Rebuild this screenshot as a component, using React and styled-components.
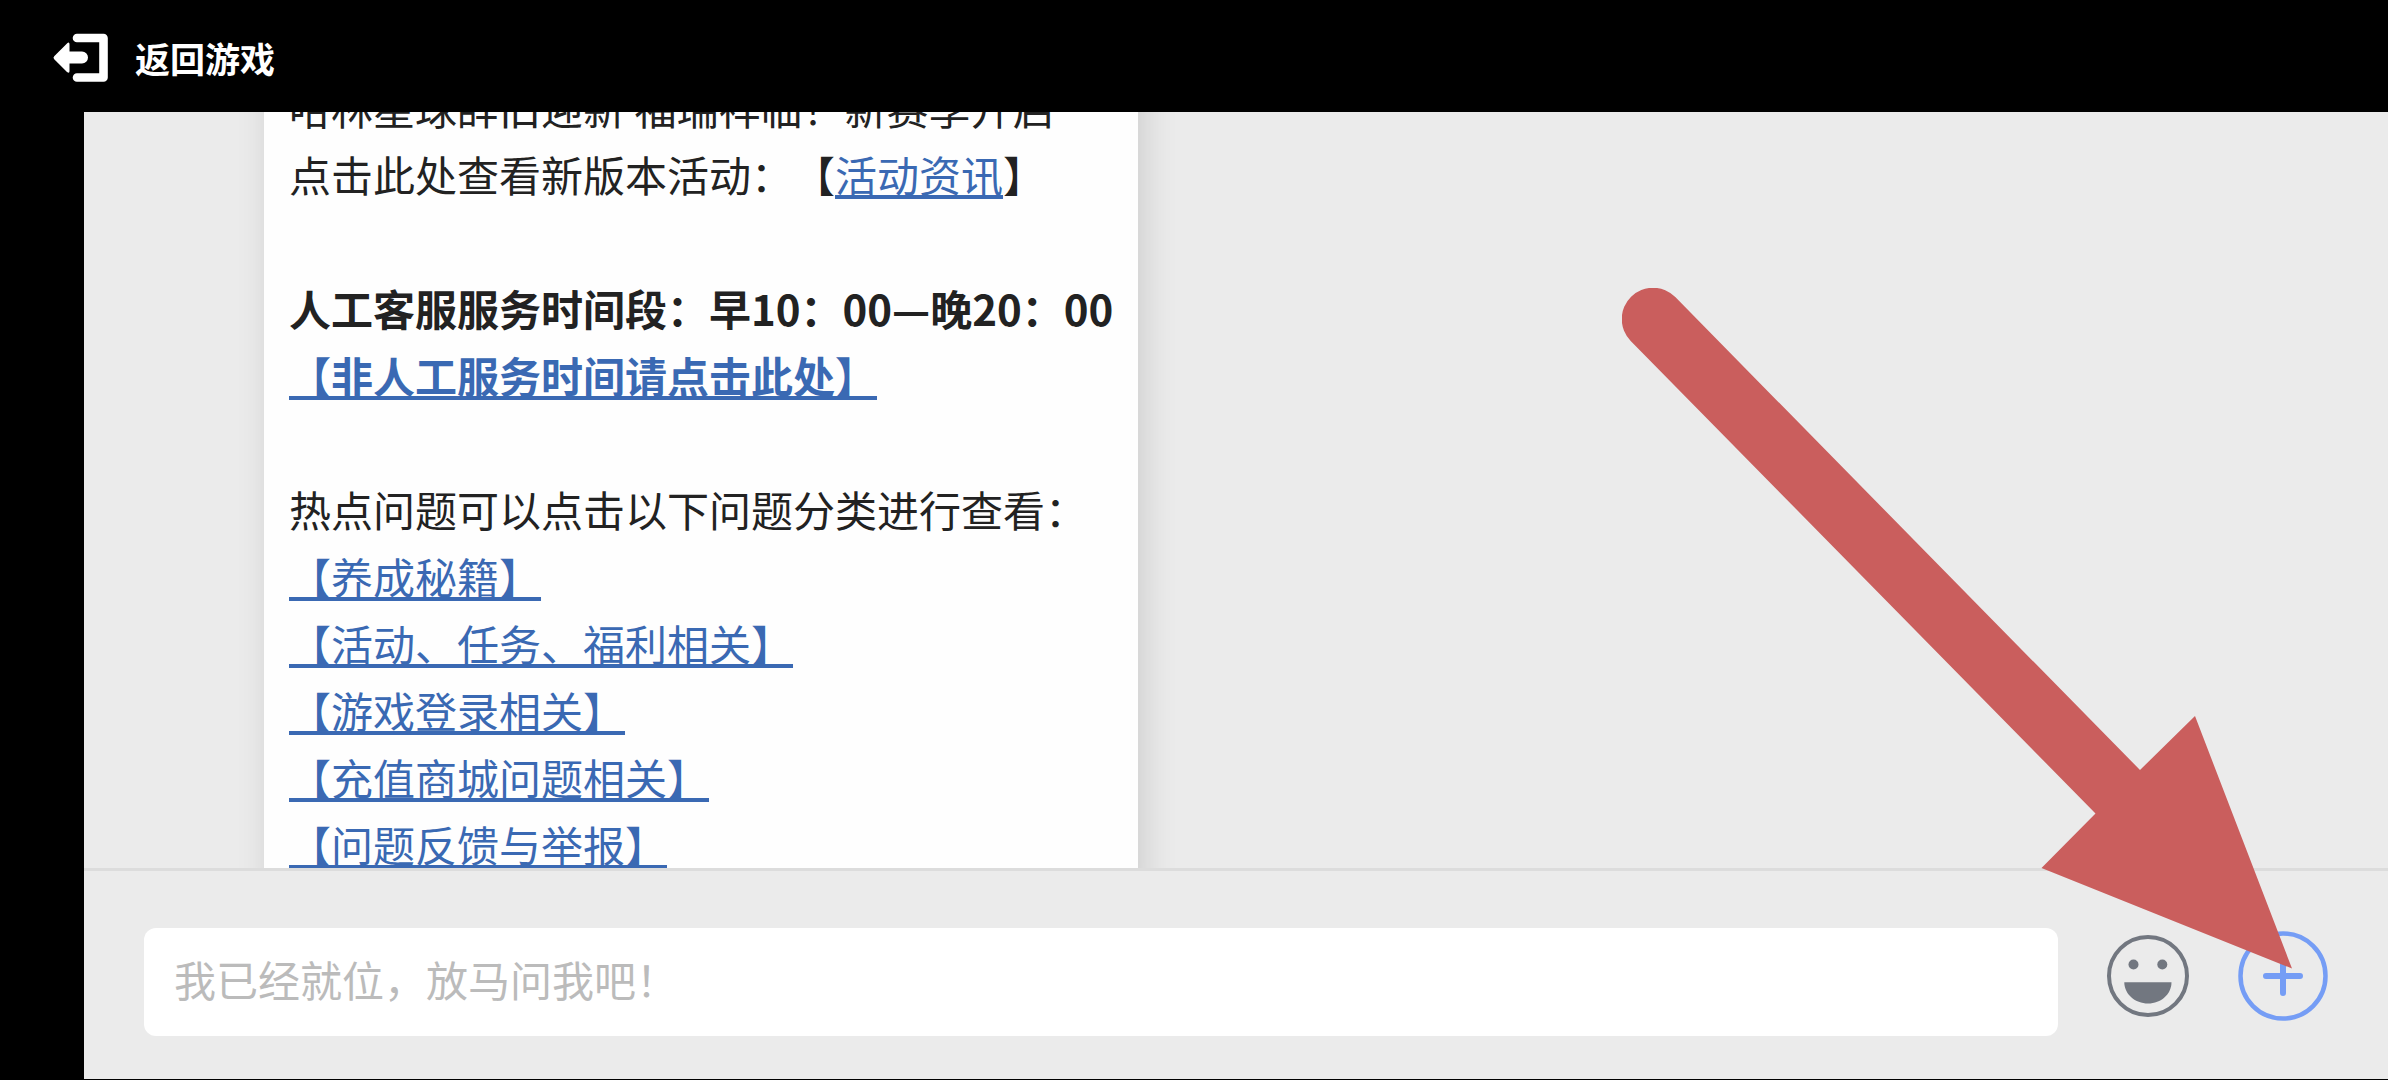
import React, { useLayoutEffect, useRef } from 'react';
import styled, { createGlobalStyle } from 'styled-components';

const GlobalStyle = createGlobalStyle`
  * {
    box-sizing: border-box;
  }
  body {
    margin: 0;
    background-color: #000;
    font-family: 'Noto Sans CJK SC', 'Noto Sans', sans-serif;
    text-spacing-trim: space-all;
  }
`;

const Page = styled.div`
  display: flex;
  flex-direction: column;
  height: 100vh;
  padding-bottom: 1px;
  overflow: hidden;
`;

const Header = styled.header`
  display: flex;
  flex: none;
  align-items: center;
  height: 112px;
  padding: 4px 52px 0;
`;

const BackButton = styled.button`
  display: flex;
  align-items: center;
  gap: 25px;
  padding: 0;
  border: none;
  background: none;
  color: #fff;
  font-family: inherit;
  font-size: 35px;
  font-weight: 700;
  line-height: 50px;
  cursor: pointer;
`;

const Service = styled.main`
  position: relative;
  display: flex;
  flex: 1;
  flex-direction: column;
  min-height: 0;
  margin-left: 84px;
  background-color: #ebebeb;
`;

const Messages = styled.section`
  flex: 1;
  min-height: 0;
  padding: 40px 180px;
  overflow: hidden;
`;

const Bubble = styled.article`
  width: fit-content;
  min-width: 873px;
  padding: 25px;
  background-color: #fefefe;
  box-shadow: 6px 0 32px rgba(0, 0, 0, 0.13);
  color: #222;
  font-size: 42px;
  line-height: 67px;
`;

const Block = styled.div`
  margin-bottom: 67px;
  font-weight: ${(props) => (props.$strong ? 700 : 400)};

  &:last-child {
    margin-bottom: 0;
  }
`;

const Line = styled.p`
  margin: 0;
  white-space: nowrap;
`;

const Link = styled.a`
  color: #3a69b3;
  text-decoration: underline;
  text-decoration-skip-ink: none;
  text-decoration-thickness: 4px;
  text-underline-offset: 3px;
`;

const Composer = styled.form`
  display: flex;
  flex: none;
  align-items: flex-start;
  gap: 45px;
  padding: 57px 60px 43px;
  border-top: 3px solid #dcdcdc;
`;

const MessageInput = styled.input`
  flex: 1;
  min-width: 0;
  height: 108px;
  padding: 0 30px 8px;
  border: none;
  border-radius: 12px;
  outline: none;
  background-color: #fff;
  color: #222;
  font-family: inherit;
  font-size: 42px;

  &::placeholder {
    color: #bbb;
    opacity: 1;
  }
`;

const Tools = styled.div`
  display: flex;
  align-items: center;
  gap: 45px;
  height: 96px;
`;

const ToolButton = styled.button`
  display: block;
  width: 90px;
  height: 90px;
  padding: 0;
  border: none;
  background: none;
  color: ${(props) => props.$color};
  cursor: pointer;
`;

// lies over the messages and the composer, tip on the plus button
const Pointer = styled.svg`
  position: absolute;
  right: 96px;
  bottom: 110px;
  pointer-events: none;
`;

const ExitIcon = () => (
  <svg width="58" height="50" viewBox="0 0 58 50" fill="none" aria-hidden="true">
    <path d="M25 5H51.5V44.5H25" stroke="#fff" strokeWidth="8.6" strokeLinecap="round" strokeLinejoin="round" />
    <path d="M2.200 23.200 15 10.400q2.500-2 2.500 1V18.500H30a6 6 0 0 1 0 12H17.500v7.500q0 3-2.500 1L2.200 26.200q-1.500-1.500 0-3z" fill="#fff" />
  </svg>
);

const SmileIcon = () => (
  <svg width="90" height="90" viewBox="0 0 90 90" aria-hidden="true">
    <circle cx="45" cy="45" r="39" fill="none" stroke="currentColor" strokeWidth="4" />
    <circle cx="30.500" cy="33.500" r="5" fill="currentColor" />
    <circle cx="59.300" cy="33.500" r="5" fill="currentColor" />
    <path d="M21.300 51.300H68.500C68.500 63 58 72.600 45 72.600S21.300 63 21.300 51.300z" fill="currentColor" />
  </svg>
);

const PlusIcon = () => (
  <svg width="90" height="90" viewBox="0 0 90 90" fill="none" stroke="currentColor" aria-hidden="true">
    <circle cx="45" cy="45" r="42.500" strokeWidth="4.500" />
    <path d="M28 45H62M45 28V62" strokeWidth="6" strokeLinecap="round" />
  </svg>
);

const topics = [
  '【养成秘籍】',
  '【活动、任务、福利相关】',
  '【游戏登录相关】',
  '【充值商城问题相关】',
  '【问题反馈与举报】',
];

const App = () => {
    const messages = useRef(null);

    useLayoutEffect(() => {
        messages.current.scrollTop = 104;
    }, []);

    return (
        <Page>
            <GlobalStyle />

            <Header>
                <BackButton type="button"><ExitIcon />返回游戏</BackButton>
            </Header>

            <Service>
                <Messages ref={messages}>
                    <Bubble>
                        <Block>
                            <Line>哈林星球辞旧迎新 福瑞祥临！新赛季开启</Line>
                            <Line>点击此处查看新版本活动：【<Link href="#news">活动资讯</Link>】</Line>
                        </Block>
                        <Block $strong>
                            <Line>人工客服服务时间段：早10：00—晚20：00</Line>
                            <Line><Link href="#offline">【非人工服务时间请点击此处】</Link></Line>
                        </Block>
                        <Block>
                            <Line>热点问题可以点击以下问题分类进行查看：</Line>
                            {topics.map((topic) => (
                                <Line key={topic}><Link href="#topic">{topic}</Link></Line>
                            ))}
                        </Block>
                    </Bubble>
                </Messages>

                <Composer onSubmit={(e) => e.preventDefault()}>
                    <MessageInput type="text" name="message" aria-label="我已经就位，放马问我吧！" placeholder="我已经就位，放马问我吧！" />
                    <Tools>
                        <ToolButton type="button" $color="#727780" aria-label="表情"><SmileIcon /></ToolButton>
                        <ToolButton type="button" $color="#759df5" aria-label="更多"><PlusIcon /></ToolButton>
                    </Tools>
                </Composer>

                <Pointer width="670" height="681" viewBox="0 0 670 681" aria-hidden="true">
                    <path d="M8.700 52.900A31.200 31.200 0 0 1 53.300 9.100L518 482 573 428 670 680.500 419.500 580 473.500 525.500z" fill="#ca5e5d" />
                </Pointer>
            </Service>
        </Page>
    );
};

export default App;
